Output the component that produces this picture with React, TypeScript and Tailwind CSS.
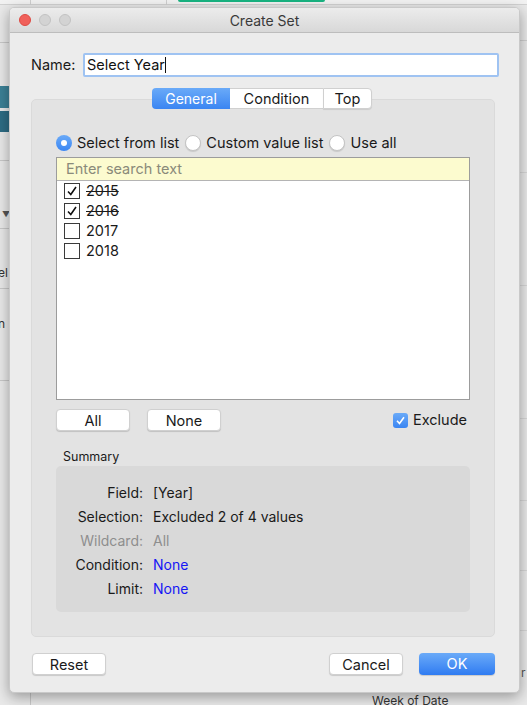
import React from 'react';

const font = { fontFamily: 'Inter, "Noto Sans", sans-serif' };

function Radio({ checked, label }: { checked?: boolean; label: string }) {
  return (
    <div className="flex items-center gap-[5px]">
      {checked ? (
        <span className="w-[16px] h-[16px] rounded-full bg-gradient-to-b from-[#6aaaf8] to-[#3a86f3] flex items-center justify-center">
          <span className="w-[6px] h-[6px] rounded-full bg-white" />
        </span>
      ) : (
        <span className="w-[16px] h-[16px] rounded-full bg-white border border-[#c4c4c4] shadow-[0_1px_1px_rgba(0,0,0,0.12)]" />
      )}
      <span className="text-[14.5px] text-[#1a1a1a]">{label}</span>
    </div>
  );
}

function ListItem({ year, checked }: { year: string; checked: boolean }) {
  return (
    <div className="h-[20px] flex items-center pl-[7px] gap-[6px]">
      <span className="w-[16px] h-[16px] border border-[#3a3a3a] bg-white flex items-center justify-center">
        {checked && (
          <svg width="12" height="12" viewBox="0 0 12 12">
            <path d="M2 6.5 L4.8 9.5 L10 2" fill="none" stroke="#111" strokeWidth="1.6" />
          </svg>
        )}
      </span>
      <span className={`text-[14.5px] text-[#1a1a1a] ${checked ? 'line-through' : ''}`}>{year}</span>
    </div>
  );
}

function MacButton({ children, className = '' }: { children: React.ReactNode; className?: string }) {
  return (
    <button className={`h-[22px] rounded-[4px] bg-white border border-[#d0d0d0] shadow-[0_1px_1px_rgba(0,0,0,0.15)] text-[14.5px] text-[#1a1a1a] ${className}`}>
      {children}
    </button>
  );
}

export default function App() {
  const summary = [
    { label: 'Field:', value: '[Year]', tone: 'normal' },
    { label: 'Selection:', value: 'Excluded 2 of 4 values', tone: 'normal' },
    { label: 'Wildcard:', value: 'All', tone: 'muted' },
    { label: 'Condition:', value: 'None', tone: 'link' },
    { label: 'Limit:', value: 'None', tone: 'link' },
  ];

  return (
    <div className="relative w-[527px] h-[705px] overflow-hidden bg-[#e9e9e9]" style={font}>
      {/* app behind the dialog */}
      <div className="absolute top-0 left-0 w-[527px] h-[5px] bg-[#f2f2f2] border-b border-[#d2d2d2]" />
      <div className="absolute top-0 left-[30px] w-[1px] h-[5px] bg-[#cfcfcf]" />
      <div className="absolute top-0 left-[166px] w-[1px] h-[5px] bg-[#cfcfcf]" />
      <div className="absolute top-0 left-[178px] w-[147px] h-[2px] bg-[#19b482] rounded-b" />
      <div className="absolute top-[42px] left-0 w-[9px] h-[1px] bg-[#c8c8c8]" />
      <div className="absolute top-[86px] left-0 w-[9px] h-[22px] bg-[#3b8096]" />
      <div className="absolute top-[111px] left-0 w-[9px] h-[21px] bg-[#2d6c84]" />
      <div className="absolute top-[160px] left-0 w-[9px] h-[1px] bg-[#c8c8c8]" />
      <div className="absolute top-[208px] left-[2px] text-[8px] text-[#555]">▼</div>
      <div className="absolute top-[228px] left-0 w-[9px] h-[1px] bg-[#c8c8c8]" />
      <div className="absolute top-[264px] left-[-2px] text-[12px] text-[#333]">el</div>
      <div className="absolute top-[288px] left-0 w-[9px] h-[1px] bg-[#c8c8c8]" />
      <div className="absolute top-[315px] left-[-2px] text-[12px] text-[#333]">n</div>
      <div className="absolute top-[380px] left-0 w-[9px] h-[1px] bg-[#c8c8c8]" />
      <div className="absolute top-[40px] right-0 w-[7px] h-[1px] bg-[#cfcfcf]" />
      <div className="absolute top-[172px] right-0 w-[7px] h-[1px] bg-[#d6d6d6]" />
      <div className="absolute top-[285px] right-0 w-[7px] h-[1px] bg-[#d6d6d6]" />
      <div className="absolute top-[418px] right-0 w-[7px] h-[1px] bg-[#d6d6d6]" />
      <div className="absolute top-[500px] right-0 w-[7px] h-[1px] bg-[#d6d6d6]" />
      <div className="absolute top-[570px] right-0 w-[7px] h-[1px] bg-[#d6d6d6]" />
      <div className="absolute top-[630px] right-0 w-[7px] h-[1px] bg-[#d6d6d6]" />
      <div className="absolute top-[664px] left-[521px] text-[12px] text-[#555]">r</div>
      <div className="absolute top-[693px] left-[30px] w-[1px] h-[12px] bg-[#c8c8c8]" />
      <div className="absolute top-[695px] left-[372px] text-[12px] leading-[12px] text-[#333]">Week of Date</div>

      {/* dialog window */}
      <div className="absolute top-[7px] left-[9px] w-[511px] h-[686px] rounded-[5px] bg-[#ececec] shadow-[0_4px_14px_rgba(0,0,0,0.35)] border border-[#c9c9c9] flex flex-col overflow-hidden">
        <div className="relative h-[25px] bg-gradient-to-b from-[#ececec] to-[#d8d8d8] border-b border-[#bdbdbd] flex items-center justify-center shrink-0">
          <div className="absolute left-[9px] top-[6px] flex gap-[8px]">
            <span className="w-[12px] h-[12px] rounded-full bg-[#f0605a] border border-[#de4a43]" />
            <span className="w-[12px] h-[12px] rounded-full bg-[#d3d3d3] border border-[#c2c2c2]" />
            <span className="w-[12px] h-[12px] rounded-full bg-[#d3d3d3] border border-[#c2c2c2]" />
          </div>
          <span className="text-[14px] text-[#3a3a3a]">Create Set</span>
        </div>

        <div className="flex items-center pl-[21px] pr-[20px] mt-[20px]">
          <span className="text-[14.5px] text-[#1a1a1a] w-[52px]">Name:</span>
          <div className="flex-1 h-[24px] bg-white border-[2px] border-[#9fc3f2] rounded-[2px] flex items-center px-[2px]">
            <span className="text-[14.5px] text-[#111]">Select Year</span>
            <span className="w-[1px] h-[16px] bg-[#111]" />
          </div>
        </div>

        <div className="relative z-10 mt-[11px] mb-[-10px] flex ml-[142px]">
          <div className="h-[21px] w-[78px] rounded-l-[4px] bg-gradient-to-b from-[#6aaaf8] to-[#3a85f2] text-white text-[14px] flex items-center justify-center">
            General
          </div>
          <div className="h-[21px] w-[93px] bg-white border-y border-[#d0d0d0] text-[14.5px] text-[#1a1a1a] flex items-center justify-center">
            Condition
          </div>
          <div className="h-[21px] w-[49px] rounded-r-[4px] bg-white border border-[#d0d0d0] text-[14.5px] text-[#1a1a1a] flex items-center justify-center shadow-[0_1px_1px_rgba(0,0,0,0.1)]">
            Top
          </div>
        </div>

        <div className="ml-[21px] w-[464px] h-[538px] bg-[#e3e3e3] border border-[#dadada] rounded-[5px] pt-[35px] px-[24px]">
          <div className="flex items-center gap-[6px] h-[16px]">
            <Radio checked label="Select from list" />
            <Radio label="Custom value list" />
            <Radio label="Use all" />
          </div>

          <div className="mt-[6px] h-[243px] bg-white border border-[#9c9c9c]">
            <div className="h-[23px] bg-[#fcfbcf] border-b border-[#b4b4b4] flex items-center pl-[9px]">
              <span className="text-[14.5px] text-[#8a8a7a]">Enter search text</span>
            </div>
            <ListItem year="2015" checked />
            <ListItem year="2016" checked />
            <ListItem year="2017" checked={false} />
            <ListItem year="2018" checked={false} />
          </div>

          <div className="mt-[9px] flex items-center">
            <MacButton className="w-[74px]">All</MacButton>
            <MacButton className="w-[74px] ml-[17px]">None</MacButton>
            <div className="ml-auto mr-[3px] flex items-center gap-[5px]">
              <span className="w-[15px] h-[15px] rounded-[3px] bg-gradient-to-b from-[#6aaaf8] to-[#3a85f2] flex items-center justify-center">
                <svg width="11" height="11" viewBox="0 0 11 11">
                  <path d="M2 5.8 L4.5 8.5 L9 2.2" fill="none" stroke="#fff" strokeWidth="1.6" />
                </svg>
              </span>
              <span className="text-[14.5px] text-[#1a1a1a]">Exclude</span>
            </div>
          </div>

          <div className="mt-[18px] pl-[7px] text-[12.5px] text-[#1a1a1a] h-[15px] leading-[15px]">Summary</div>

          <div className="mt-[2px] h-[146px] bg-[#d9d9d9] rounded-[5px] pt-[14px]">
            {summary.map(row => (
              <div key={row.label} className="h-[24px] flex items-center">
                <span
                  className={`w-[87px] text-right text-[14px] ${row.tone === 'muted' ? 'text-[#8e8e8e]' : 'text-[#1a1a1a]'}`}
                >
                  {row.label}
                </span>
                <span
                  className={`ml-[10px] text-[14px] ${
                    row.tone === 'muted' ? 'text-[#8e8e8e]' : row.tone === 'link' ? 'text-[#1515f5]' : 'text-[#1a1a1a]'
                  }`}
                >
                  {row.value}
                </span>
              </div>
            ))}
          </div>
        </div>

        <div className="mt-[16px] flex items-center pl-[22px] pr-[24px]">
          <MacButton className="w-[74px]">Reset</MacButton>
          <MacButton className="w-[74px] ml-auto">Cancel</MacButton>
          <button className="ml-[16px] w-[76px] h-[22px] rounded-[4px] bg-gradient-to-b from-[#6aaaf8] to-[#2f7bf1] text-white text-[14.5px] shadow-[0_1px_1px_rgba(0,0,0,0.15)]">
            OK
          </button>
        </div>
      </div>
    </div>
  );
}
